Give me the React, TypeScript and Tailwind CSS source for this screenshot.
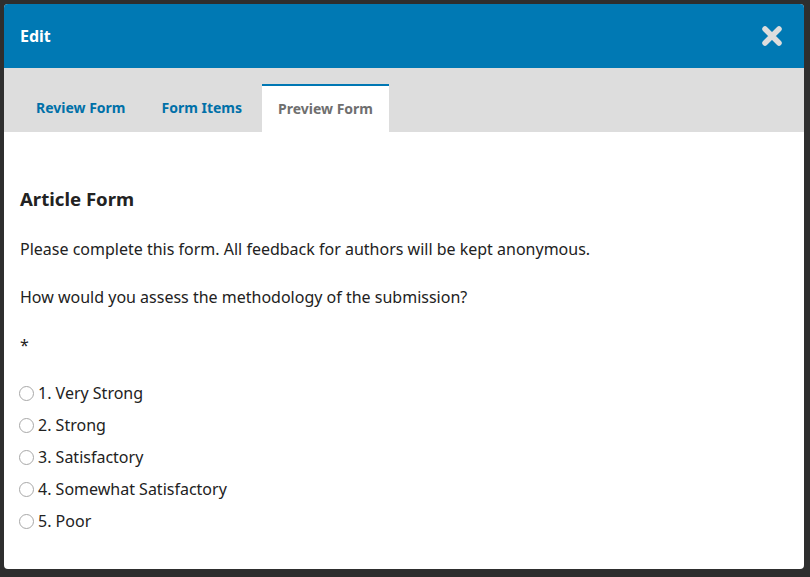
const options = ['1. Very Strong', '2. Strong', '3. Satisfactory', '4. Somewhat Satisfactory', '5. Poor'];

function CloseIcon() {
  return (
    <svg width="22" height="22" viewBox="0 0 22 22" aria-hidden>
      <path d="M4 4 L18 18 M18 4 L4 18" stroke="#dddddd" strokeWidth="5.5" strokeLinecap="round" />
    </svg>
  );
}

function Tab({ label, active }: { label: string; active?: boolean }) {
  if (active) {
    return (
      <div className="h-12 px-4 flex items-center bg-white border-t-2 border-[#0077b3] text-[#6f6f6f] font-bold text-sm">
        {label}
      </div>
    );
  }
  return (
    <div className="h-12 px-4 flex items-center text-[#0070a8] font-bold text-sm">{label}</div>
  );
}

export default function App() {
  return (
    <div
      className="w-[810px] h-[577px] bg-[#2e2e2e] pt-1 pl-1 overflow-hidden"
      style={{ fontFamily: '"Noto Sans", "Open Sans", sans-serif' }}
    >
      <div className="w-[800px] h-[565px] bg-white rounded overflow-hidden flex flex-col">
        <div className="h-16 bg-[#0079b4] flex items-center justify-between pl-4 pr-[21px] shrink-0">
          <span className="text-white font-bold text-base">Edit</span>
          <CloseIcon />
        </div>
        <div className="h-16 bg-[#dddddd] flex items-end pl-4 gap-1 shrink-0">
          <Tab label="Review Form" />
          <Tab label="Form Items" />
          <Tab label="Preview Form" active />
        </div>
        <div className="px-4 pt-[55px] text-[#222222] text-base leading-5">
          <h2 className="text-[18.6px] font-bold leading-6">Article Form</h2>
          <p className="mt-7">Please complete this form. All feedback for authors will be kept anonymous.</p>
          <p className="mt-7">How would you assess the methodology of the submission?</p>
          <p className="mt-7">*</p>
          <div className="mt-7 flex flex-col gap-3">
            {options.map((o) => (
              <label key={o} className="flex items-center h-5">
                <span className="w-[15px] h-[15px] rounded-full border border-[#a8a8a8] bg-white ml-[-1px] mr-[4px]" />
                {o}
              </label>
            ))}
          </div>
        </div>
      </div>
    </div>
  );
}
